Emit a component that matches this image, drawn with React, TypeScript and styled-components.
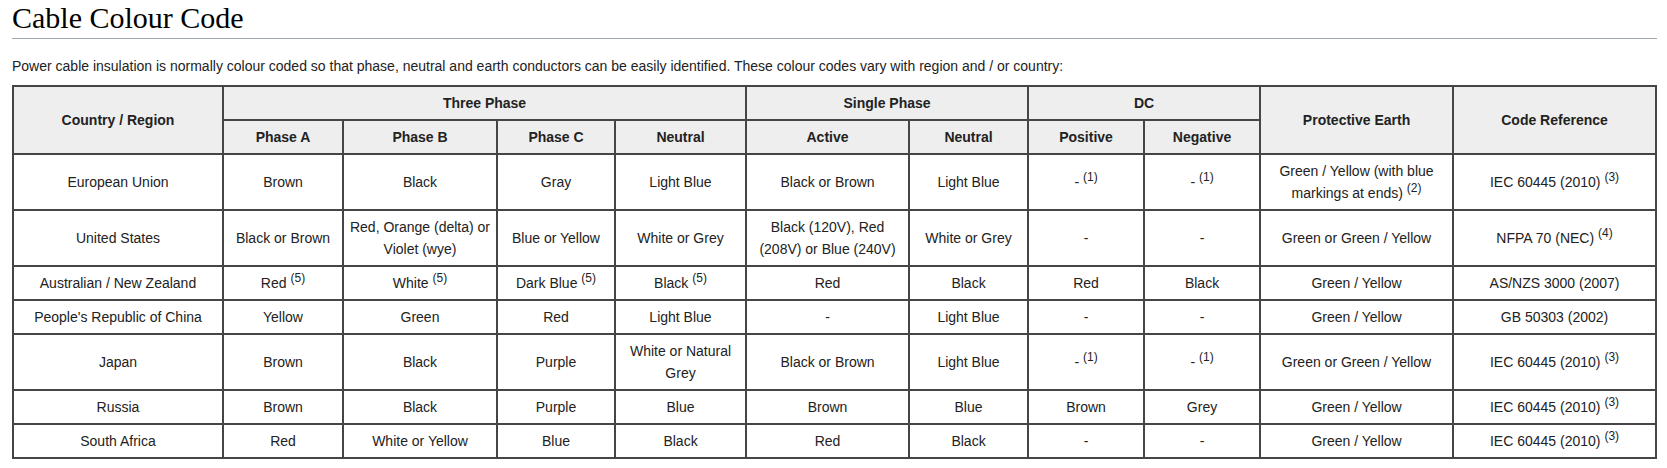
import * as React from "react"
import styled, { createGlobalStyle } from "styled-components"

const GlobalStyle = createGlobalStyle`
    body {
        margin: 0;
        background: #fff;
        color: #222;
        font-family: "Liberation Sans", Arial, sans-serif;
    }
`

const Page = styled.div`
    padding: 0 10px 0 12px;
`

const Heading = styled.h2`
    margin: 0;
    padding-bottom: 2px;
    font-family: "Liberation Serif", "Times New Roman", serif;
    font-size: 30px;
    font-weight: normal;
    line-height: 36px;
    color: #000;
    border-bottom: 1px solid #a2a9b1;
`

const Intro = styled.p`
    margin: 16px 0 8px;
    font-size: 14px;
    line-height: 22px;
`

const Table = styled.table`
    width: 100%;
    border-collapse: collapse;
    table-layout: fixed;
    border: 2px solid #454545;
    font-size: 14px;
    line-height: 22px;
    text-align: center;
`

const Col = styled.col<{ $w: number }>`
    width: ${({ $w }) => $w}px;
`

const Th = styled.th`
    background: #eee;
    border: 2px solid #454545;
    padding: 5px 2px;
    font-weight: bold;
    color: #222;
`

const Td = styled.td`
    border: 2px solid #454545;
    padding: 5px 2px;
    color: #222;
`

const Note = styled.sup`
    font-size: 12px;
    line-height: 0;
    vertical-align: 6px;
`

type Cell = string | [string, number]

const widths = [210, 120, 154, 118, 131, 163, 119, 116, 116, 193, 203]

const rows: Cell[][] = [
    ["European Union", "Brown", "Black", "Gray", "Light Blue", "Black or Brown", "Light Blue", ["-", 1], ["-", 1], ["Green / Yellow (with blue markings at ends)", 2], ["IEC 60445 (2010)", 3]],
    ["United States", "Black or Brown", "Red, Orange (delta) or Violet (wye)", "Blue or Yellow", "White or Grey", "Black (120V), Red (208V) or Blue (240V)", "White or Grey", "-", "-", "Green or Green / Yellow", ["NFPA 70 (NEC)", 4]],
    ["Australian / New Zealand", ["Red", 5], ["White", 5], ["Dark Blue", 5], ["Black", 5], "Red", "Black", "Red", "Black", "Green / Yellow", "AS/NZS 3000 (2007)"],
    ["People's Republic of China", "Yellow", "Green", "Red", "Light Blue", "-", "Light Blue", "-", "-", "Green / Yellow", "GB 50303 (2002)"],
    ["Japan", "Brown", "Black", "Purple", "White or Natural Grey", "Black or Brown", "Light Blue", ["-", 1], ["-", 1], "Green or Green / Yellow", ["IEC 60445 (2010)", 3]],
    ["Russia", "Brown", "Black", "Purple", "Blue", "Brown", "Blue", "Brown", "Grey", "Green / Yellow", ["IEC 60445 (2010)", 3]],
    ["South Africa", "Red", "White or Yellow", "Blue", "Black", "Red", "Black", "-", "-", "Green / Yellow", ["IEC 60445 (2010)", 3]],
]

const subHeads = ["Phase A", "Phase B", "Phase C", "Neutral", "Active", "Neutral", "Positive", "Negative"]

function renderCell(cell: Cell) {
    if (typeof cell === "string") return cell
    const [text, note] = cell
    return (
        <>
            {text} <Note>({note})</Note>
        </>
    )
}

export default function App() {
    return (
        <Page>
            <GlobalStyle />
            <Heading>Cable Colour Code</Heading>
            <Intro>
                Power cable insulation is normally colour coded so that phase, neutral and earth conductors can be easily
                identified. These colour codes vary with region and / or country:
            </Intro>
            <Table>
                <colgroup>
                    {widths.map((w, i) => (
                        <Col key={i} $w={w} />
                    ))}
                </colgroup>
                <thead>
                    <tr>
                        <Th rowSpan={2}>Country / Region</Th>
                        <Th colSpan={4}>Three Phase</Th>
                        <Th colSpan={2}>Single Phase</Th>
                        <Th colSpan={2}>DC</Th>
                        <Th rowSpan={2}>Protective Earth</Th>
                        <Th rowSpan={2}>Code Reference</Th>
                    </tr>
                    <tr>
                        {subHeads.map((h, i) => (
                            <Th key={i}>{h}</Th>
                        ))}
                    </tr>
                </thead>
                <tbody>
                    {rows.map((row, r) => (
                        <tr key={r}>
                            {row.map((cell, c) => (
                                <Td key={c}>{renderCell(cell)}</Td>
                            ))}
                        </tr>
                    ))}
                </tbody>
            </Table>
        </Page>
    )
}
